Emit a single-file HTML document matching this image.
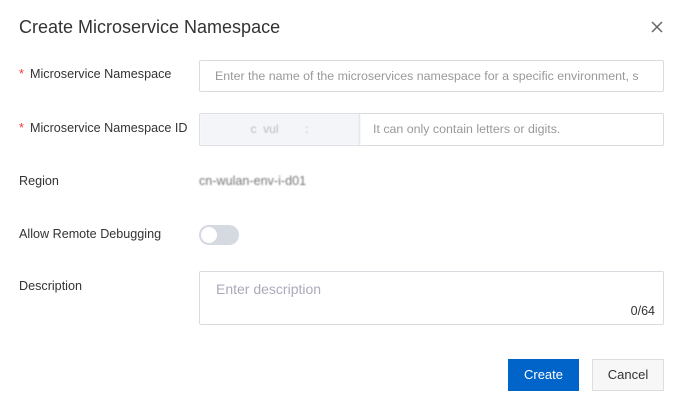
<!DOCTYPE html>
<html><head><style>
body{margin:0;width:682px;height:409px;background:#fff;font-family:"Liberation Sans",sans-serif;position:relative;overflow:hidden;color:#333}
.a{position:absolute}
.lbl{font-size:12.6px;color:#333;left:19px}
.req:before{content:"*";color:#e33;display:inline-block;width:11px}
.box{border:1px solid #d8dbe0;border-radius:2px;box-sizing:border-box;background:#fff}
.ph{color:#999;font-size:12.4px}
</style></head><body>
<div class="a" style="left:19px;top:17px;font-size:18px;color:#333">Create Microservice Namespace</div>
<svg class="a" style="left:651px;top:21px" width="12" height="12"><path d="M1 1L11 11M11 1L1 11" stroke="#666" stroke-width="1.5"/></svg>
<div class="a lbl req" style="top:67px;left:19px">Microservice Namespace</div>
<div class="a box" style="left:199px;top:60px;width:465px;height:32px"><div class="ph" style="padding:8px 15px;white-space:nowrap;overflow:hidden">Enter the name of the microservices namespace for a specific environment, s</div></div>
<div class="a lbl req" style="top:121px;left:19px">Microservice Namespace ID</div>
<div class="a box" style="left:199px;top:113px;width:465px;height:33px">
<div class="a" style="left:0;top:0;width:159px;height:31px;background:#f3f5f8;border-right:1px solid #d8dbe0;color:#bbb;font-size:12px;line-height:31px;text-align:center;filter:blur(0.6px)">c &nbsp;vul&nbsp; &nbsp; &nbsp; &nbsp; :</div>
<div class="a ph" style="left:173px;top:8px">It can only contain letters or digits.</div></div>
<div class="a lbl" style="top:174px">Region</div>
<div class="a" style="left:199px;top:174px;font-size:12.6px;color:#777;filter:blur(0.8px)">cn-wulan-env-i-d01</div>
<div class="a lbl" style="top:227px">Allow Remote Debugging</div>
<div class="a" style="left:199px;top:225px;width:40px;height:20px;border-radius:10px;background:#d5d9e0"><div class="a" style="left:2px;top:2px;width:16px;height:16px;border-radius:50%;background:#fff"></div></div>
<div class="a lbl" style="top:279px">Description</div>
<div class="a box" style="left:199px;top:271px;width:465px;height:54px"><div class="a" style="left:16px;top:9px;font-size:14px;color:#aab">Enter description</div><div class="a" style="right:8px;top:32px;font-size:12.5px;color:#333">0/64</div></div>
<div class="a" style="left:508px;top:359px;width:71px;height:32px;background:#0064c8;color:#fff;font-size:13px;line-height:32px;text-align:center">Create</div>
<div class="a" style="left:592px;top:359px;width:72px;height:32px;box-sizing:border-box;border:1px solid #ddd;background:#f7f7f7;color:#333;font-size:13px;line-height:30px;text-align:center">Cancel</div>
</body></html>
